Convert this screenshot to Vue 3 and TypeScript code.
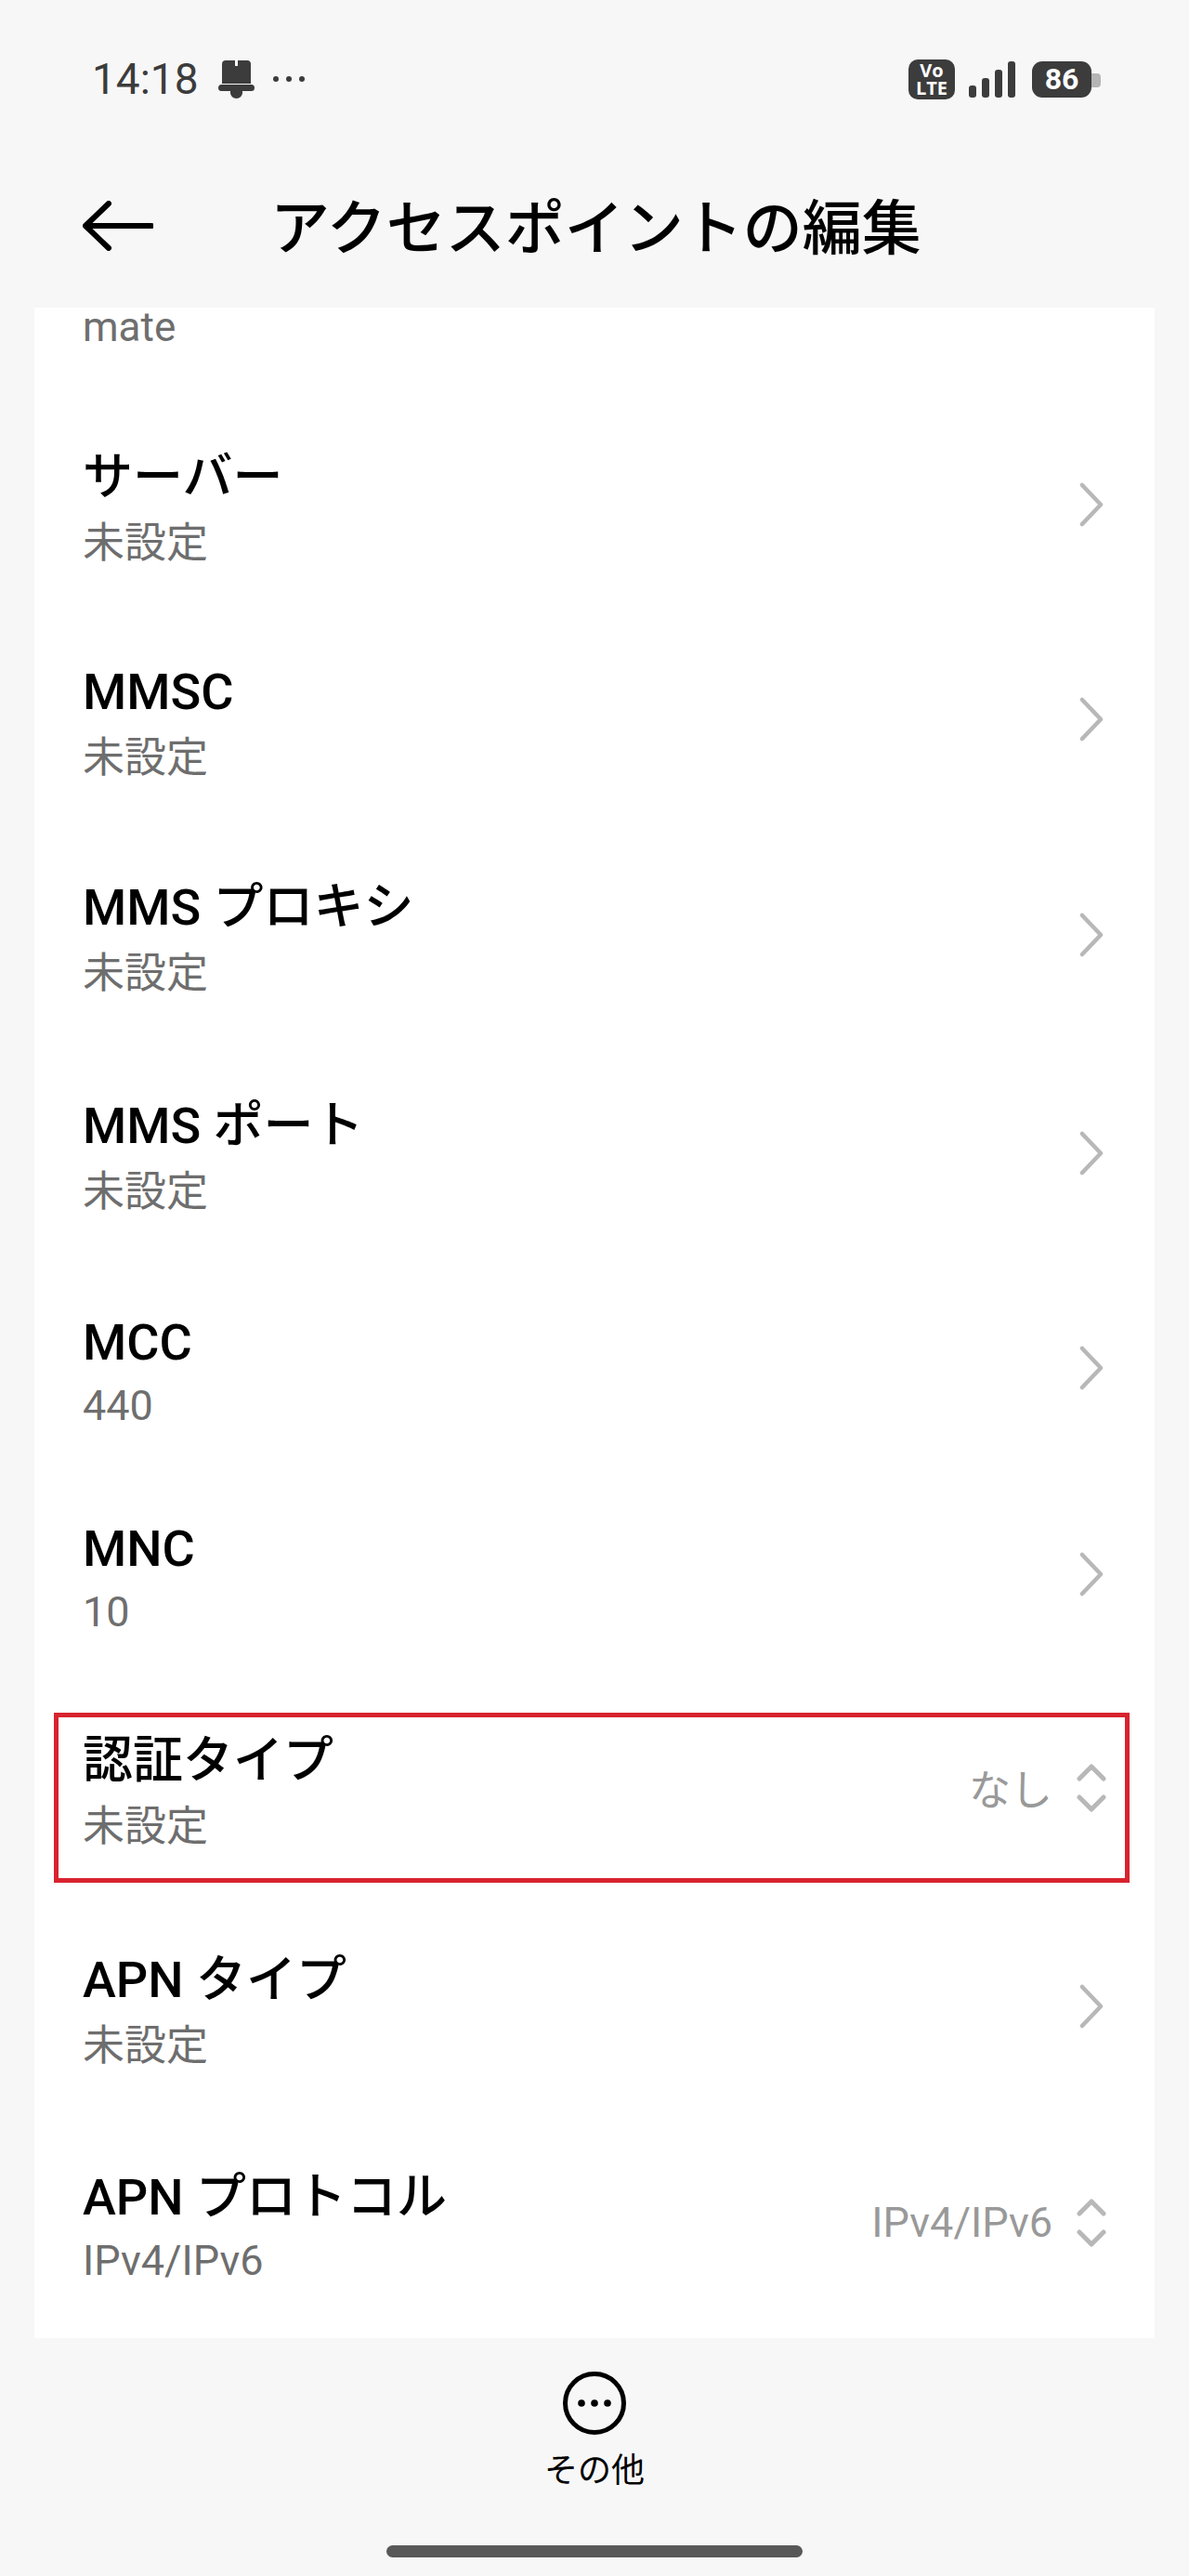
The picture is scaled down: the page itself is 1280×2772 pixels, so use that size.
<script setup lang="ts">
type ApnRow = {
  title: string;
  value: string;
  height: number;
  picked?: string;
  marked?: boolean;
};

const rows: ApnRow[] = [
  { title: "サーバー", value: "未設定", height: 231 },
  { title: "MMSC", value: "未設定", height: 231 },
  { title: "MMS プロキシ", value: "未設定", height: 233 },
  { title: "MMS ポート", value: "未設定", height: 237 },
  { title: "MCC", value: "440", height: 225 },
  { title: "MNC", value: "10", height: 220 },
  { title: "認証タイプ", value: "未設定", height: 239, picked: "なし", marked: true },
  { title: "APN タイプ", value: "未設定", height: 232 },
  { title: "APN プロトコル", value: "IPv4/IPv6", height: 233, picked: "IPv4/IPv6" }
];
</script>

<template>
  <div class="screen">
    <div class="status">
      <div class="status__left">
        <span class="status__time">14:18</span>
        <svg class="status__bell" width="39" height="41" viewBox="0 0 39 41" aria-hidden="true">
          <path d="M4 4a4 4 0 0 1 4-4h10v6h3V0h10a4 4 0 0 1 4 4v21H4z" fill="#3c3c3c" />
          <rect x="0" y="26" width="39" height="7" rx="3.5" fill="#3c3c3c" />
          <path d="M13 33h13v2a6.500 6 0 0 1-13 0z" fill="#3c3c3c" />
        </svg>
        <svg width="37" height="8" viewBox="0 0 37 8" aria-hidden="true">
          <circle cx="4" cy="4" r="3" fill="#3c3c3c" />
          <circle cx="18" cy="4" r="3" fill="#3c3c3c" />
          <circle cx="32" cy="4" r="3" fill="#3c3c3c" />
        </svg>
      </div>
      <div class="status__right">
        <span class="status__volte"><span>Vo</span><span>LTE</span></span>
        <svg width="50" height="40" viewBox="0 0 50 40" aria-hidden="true">
          <rect x="0" y="27" width="8" height="13" rx="3" fill="#3c3c3c" />
          <rect x="14" y="19" width="8" height="21" rx="3" fill="#3c3c3c" />
          <rect x="28" y="10" width="8" height="30" rx="3" fill="#3c3c3c" />
          <rect x="42" y="1" width="8" height="39" rx="3" fill="#3c3c3c" />
        </svg>
        <span class="status__battery">86</span>
      </div>
    </div>

    <header class="header">
      <svg class="header__back" width="76" height="54" viewBox="0 0 76 54" aria-hidden="true">
        <path d="M28 3 3 27l25 24M3 27h71" fill="none" stroke="#000" stroke-width="6" stroke-linecap="round" stroke-linejoin="round" />
      </svg>
      <h1 class="header__title">アクセスポイントの編集</h1>
    </header>

    <main class="card">
      <div class="card__clipped">mate</div>
      <div
        v-for="row in rows"
        :key="row.title"
        class="row"
        :style="{ height: `${row.height}px` }"
      >
        <div class="row__copy">
          <div class="row__title">{{ row.title }}</div>
          <div class="row__value" :class="{ 'row__value--latin': row.value !== '未設定' }">{{ row.value }}</div>
        </div>
        <span v-if="row.picked" class="row__picked">{{ row.picked }}</span>
        <svg v-if="row.picked" class="row__icon" width="32" height="52" viewBox="0 0 32 52" aria-hidden="true">
          <path d="M3 16 16 3l13 13M3 36l13 13 13-13" fill="none" stroke="#b8b8b8" stroke-width="5" stroke-linecap="round" stroke-linejoin="round" />
        </svg>
        <svg v-else class="row__icon" width="32" height="48" viewBox="0 0 32 48" aria-hidden="true">
          <path d="M6 3l20 21L6 45" fill="none" stroke="#b8b8b8" stroke-width="4.500" stroke-linecap="round" stroke-linejoin="round" />
        </svg>
        <div v-if="row.marked" class="row__mark"></div>
      </div>
    </main>

    <footer class="footer">
      <svg width="70" height="70" viewBox="0 0 70 70" aria-hidden="true">
        <circle cx="35" cy="35" r="31.500" fill="none" stroke="#000" stroke-width="5" />
        <circle cx="21" cy="35" r="3.800" fill="#000" />
        <circle cx="35" cy="35" r="3.800" fill="#000" />
        <circle cx="49" cy="35" r="3.800" fill="#000" />
      </svg>
      <span class="footer__label">その他</span>
      <div class="footer__home"></div>
    </footer>
  </div>
</template>

<style>
body {
  background: #f7f7f7;
}
</style>

<style scoped>
.screen {
  width: 1280px;
  height: 2772px;
  display: flex;
  flex-direction: column;
  background: #f7f7f7;
  color: #000;
  font-family: Roboto, "Noto Sans CJK JP", sans-serif;
  overflow: hidden;
}

.status {
  height: 170px;
  box-sizing: border-box;
  padding: 63px 105px 0 99px;
  display: flex;
  justify-content: space-between;
  align-items: flex-start;
  color: #3c3c3c;
}

.status__left,
.status__right {
  display: flex;
  align-items: center;
  height: 44px;
}

.status__time {
  font-size: 46px;
  line-height: 44px;
}

.status__bell {
  margin-left: 21px;
  margin-right: 19px;
}

.status__right {
  gap: 15px;
}

.status__volte {
  width: 50px;
  height: 43px;
  display: flex;
  flex-direction: column;
  align-items: center;
  justify-content: center;
  border-radius: 10px;
  background: #3c3c3c;
  color: #fff;
  font-family: "Open Sans", sans-serif;
  font-size: 20px;
  font-weight: 700;
  line-height: 19px;
}

.status__battery {
  position: relative;
  width: 64px;
  height: 39px;
  margin-left: 3px;
  border-radius: 11px;
  background: #3c3c3c;
  color: #fff;
  font-size: 32px;
  font-weight: 700;
  line-height: 39px;
  text-align: center;
}

.status__battery::after {
  content: "";
  position: absolute;
  top: 13px;
  right: -10px;
  width: 10px;
  height: 15px;
  border-radius: 0 4px 4px 0;
  background: #b5b5b5;
}

.header {
  height: 161px;
  display: flex;
  align-items: center;
  padding-left: 89px;
  padding-bottom: 16px;
  box-sizing: border-box;
}

.header__title {
  margin: 8px 0 0 126px;
  font-size: 64px;
  font-weight: 500;
  line-height: 80px;
  white-space: nowrap;
}

.card {
  width: 1206px;
  margin-left: 37px;
  height: 2185px;
  box-sizing: border-box;
  background: #fff;
  overflow: hidden;
}

.card__clipped {
  height: 96px;
  padding-left: 52px;
  color: #6e6e6e;
  font-size: 44px;
  line-height: 42px;
}

.row {
  position: relative;
  display: flex;
  align-items: center;
  box-sizing: border-box;
  padding: 0 52px 0 52px;
}

.row__copy {
  flex: 1;
  padding-top: 13px;
}

.row__title {
  font-size: 54px;
  font-weight: 500;
  line-height: 72px;
}

.row__value {
  color: #6e6e6e;
  font-size: 45px;
  line-height: 70px;
}

.row__value--latin {
  margin-top: -3px;
}

.row__picked {
  margin-right: 26px;
  color: #999;
  font-size: 45px;
}

.row__icon {
  flex: 0 0 auto;
}

.row__mark {
  position: absolute;
  top: 39px;
  right: 27px;
  bottom: 17px;
  left: 21px;
  border: 5px solid #d8232f;
  pointer-events: none;
}

.footer {
  flex: 1;
  position: relative;
  display: flex;
  flex-direction: column;
  align-items: center;
  padding-top: 35px;
}

.footer__label {
  margin-top: 15px;
  font-size: 36px;
  line-height: 46px;
}

.footer__home {
  position: absolute;
  bottom: 20px;
  left: 416px;
  width: 448px;
  height: 13px;
  border-radius: 7px;
  background: #585858;
}
</style>
